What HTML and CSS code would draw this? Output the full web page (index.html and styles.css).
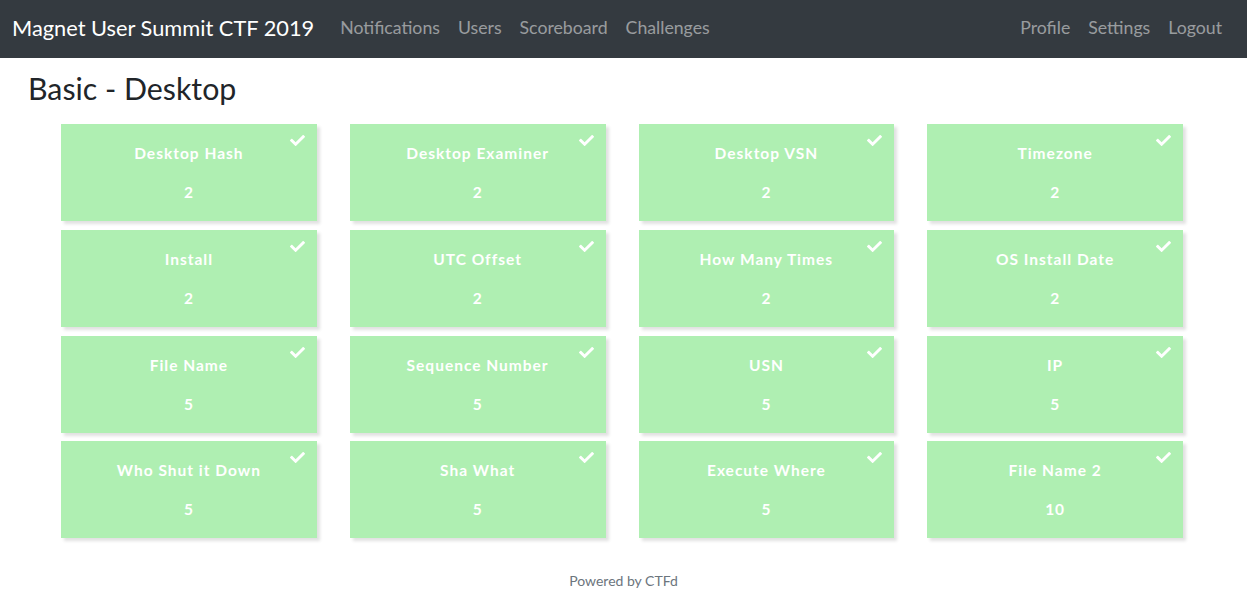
FILE: index.html
```html
<!DOCTYPE html>
<html lang="en">
<head>
<meta charset="utf-8">
<title>Challenges - Magnet User Summit CTF 2019</title>
<link rel="stylesheet" href="styles.css">
</head>
<body>
<nav class="navbar">
  <div class="nav-left">
    <a class="brand" href="#">Magnet User Summit CTF 2019</a>
    <a class="nav-link" href="#">Notifications</a>
    <a class="nav-link" href="#">Users</a>
    <a class="nav-link" href="#">Scoreboard</a>
    <a class="nav-link" href="#">Challenges</a>
  </div>
  <div class="nav-right">
    <a class="nav-link" href="#">Profile</a>
    <a class="nav-link" href="#">Settings</a>
    <a class="nav-link" href="#">Logout</a>
  </div>
</nav>

<main class="page">
  <h3 class="category">Basic - Desktop</h3>
  <div class="board">
    <button class="chal solved"><svg class="check" viewBox="0 0 512 512"><path d="M173.9 439.4l-166.4-166.4c-10-10-10-26.2 0-36.2l36.2-36.2c10-10 26.2-10 36.2 0L192 312.7 432.1 72.6c10-10 26.2-10 36.2 0l36.2 36.2c10 10 10 26.2 0 36.2l-294.4 294.4c-10 10-26.2 10-36.2 0z"/></svg><span class="name">Desktop Hash</span><span class="pts">2</span></button>
    <button class="chal solved"><svg class="check" viewBox="0 0 512 512"><path d="M173.9 439.4l-166.4-166.4c-10-10-10-26.2 0-36.2l36.2-36.2c10-10 26.2-10 36.2 0L192 312.7 432.1 72.6c10-10 26.2-10 36.2 0l36.2 36.2c10 10 10 26.2 0 36.2l-294.4 294.4c-10 10-26.2 10-36.2 0z"/></svg><span class="name">Desktop Examiner</span><span class="pts">2</span></button>
    <button class="chal solved"><svg class="check" viewBox="0 0 512 512"><path d="M173.9 439.4l-166.4-166.4c-10-10-10-26.2 0-36.2l36.2-36.2c10-10 26.2-10 36.2 0L192 312.7 432.1 72.6c10-10 26.2-10 36.2 0l36.2 36.2c10 10 10 26.2 0 36.2l-294.4 294.4c-10 10-26.2 10-36.2 0z"/></svg><span class="name">Desktop VSN</span><span class="pts">2</span></button>
    <button class="chal solved"><svg class="check" viewBox="0 0 512 512"><path d="M173.9 439.4l-166.4-166.4c-10-10-10-26.2 0-36.2l36.2-36.2c10-10 26.2-10 36.2 0L192 312.7 432.1 72.6c10-10 26.2-10 36.2 0l36.2 36.2c10 10 10 26.2 0 36.2l-294.4 294.4c-10 10-26.2 10-36.2 0z"/></svg><span class="name">Timezone</span><span class="pts">2</span></button>
    <button class="chal solved"><svg class="check" viewBox="0 0 512 512"><path d="M173.9 439.4l-166.4-166.4c-10-10-10-26.2 0-36.2l36.2-36.2c10-10 26.2-10 36.2 0L192 312.7 432.1 72.6c10-10 26.2-10 36.2 0l36.2 36.2c10 10 10 26.2 0 36.2l-294.4 294.4c-10 10-26.2 10-36.2 0z"/></svg><span class="name">Install</span><span class="pts">2</span></button>
    <button class="chal solved"><svg class="check" viewBox="0 0 512 512"><path d="M173.9 439.4l-166.4-166.4c-10-10-10-26.2 0-36.2l36.2-36.2c10-10 26.2-10 36.2 0L192 312.7 432.1 72.6c10-10 26.2-10 36.2 0l36.2 36.2c10 10 10 26.2 0 36.2l-294.4 294.4c-10 10-26.2 10-36.2 0z"/></svg><span class="name">UTC Offset</span><span class="pts">2</span></button>
    <button class="chal solved"><svg class="check" viewBox="0 0 512 512"><path d="M173.9 439.4l-166.4-166.4c-10-10-10-26.2 0-36.2l36.2-36.2c10-10 26.2-10 36.2 0L192 312.7 432.1 72.6c10-10 26.2-10 36.2 0l36.2 36.2c10 10 10 26.2 0 36.2l-294.4 294.4c-10 10-26.2 10-36.2 0z"/></svg><span class="name">How Many Times</span><span class="pts">2</span></button>
    <button class="chal solved"><svg class="check" viewBox="0 0 512 512"><path d="M173.9 439.4l-166.4-166.4c-10-10-10-26.2 0-36.2l36.2-36.2c10-10 26.2-10 36.2 0L192 312.7 432.1 72.6c10-10 26.2-10 36.2 0l36.2 36.2c10 10 10 26.2 0 36.2l-294.4 294.4c-10 10-26.2 10-36.2 0z"/></svg><span class="name">OS Install Date</span><span class="pts">2</span></button>
    <button class="chal solved"><svg class="check" viewBox="0 0 512 512"><path d="M173.9 439.4l-166.4-166.4c-10-10-10-26.2 0-36.2l36.2-36.2c10-10 26.2-10 36.2 0L192 312.7 432.1 72.6c10-10 26.2-10 36.2 0l36.2 36.2c10 10 10 26.2 0 36.2l-294.4 294.4c-10 10-26.2 10-36.2 0z"/></svg><span class="name">File Name</span><span class="pts">5</span></button>
    <button class="chal solved"><svg class="check" viewBox="0 0 512 512"><path d="M173.9 439.4l-166.4-166.4c-10-10-10-26.2 0-36.2l36.2-36.2c10-10 26.2-10 36.2 0L192 312.7 432.1 72.6c10-10 26.2-10 36.2 0l36.2 36.2c10 10 10 26.2 0 36.2l-294.4 294.4c-10 10-26.2 10-36.2 0z"/></svg><span class="name">Sequence Number</span><span class="pts">5</span></button>
    <button class="chal solved"><svg class="check" viewBox="0 0 512 512"><path d="M173.9 439.4l-166.4-166.4c-10-10-10-26.2 0-36.2l36.2-36.2c10-10 26.2-10 36.2 0L192 312.7 432.1 72.6c10-10 26.2-10 36.2 0l36.2 36.2c10 10 10 26.2 0 36.2l-294.4 294.4c-10 10-26.2 10-36.2 0z"/></svg><span class="name">USN</span><span class="pts">5</span></button>
    <button class="chal solved"><svg class="check" viewBox="0 0 512 512"><path d="M173.9 439.4l-166.4-166.4c-10-10-10-26.2 0-36.2l36.2-36.2c10-10 26.2-10 36.2 0L192 312.7 432.1 72.6c10-10 26.2-10 36.2 0l36.2 36.2c10 10 10 26.2 0 36.2l-294.4 294.4c-10 10-26.2 10-36.2 0z"/></svg><span class="name">IP</span><span class="pts">5</span></button>
    <button class="chal solved"><svg class="check" viewBox="0 0 512 512"><path d="M173.9 439.4l-166.4-166.4c-10-10-10-26.2 0-36.2l36.2-36.2c10-10 26.2-10 36.2 0L192 312.7 432.1 72.6c10-10 26.2-10 36.2 0l36.2 36.2c10 10 10 26.2 0 36.2l-294.4 294.4c-10 10-26.2 10-36.2 0z"/></svg><span class="name">Who Shut it Down</span><span class="pts">5</span></button>
    <button class="chal solved"><svg class="check" viewBox="0 0 512 512"><path d="M173.9 439.4l-166.4-166.4c-10-10-10-26.2 0-36.2l36.2-36.2c10-10 26.2-10 36.2 0L192 312.7 432.1 72.6c10-10 26.2-10 36.2 0l36.2 36.2c10 10 10 26.2 0 36.2l-294.4 294.4c-10 10-26.2 10-36.2 0z"/></svg><span class="name">Sha What</span><span class="pts">5</span></button>
    <button class="chal solved"><svg class="check" viewBox="0 0 512 512"><path d="M173.9 439.4l-166.4-166.4c-10-10-10-26.2 0-36.2l36.2-36.2c10-10 26.2-10 36.2 0L192 312.7 432.1 72.6c10-10 26.2-10 36.2 0l36.2 36.2c10 10 10 26.2 0 36.2l-294.4 294.4c-10 10-26.2 10-36.2 0z"/></svg><span class="name">Execute Where</span><span class="pts">5</span></button>
    <button class="chal solved"><svg class="check" viewBox="0 0 512 512"><path d="M173.9 439.4l-166.4-166.4c-10-10-10-26.2 0-36.2l36.2-36.2c10-10 26.2-10 36.2 0L192 312.7 432.1 72.6c10-10 26.2-10 36.2 0l36.2 36.2c10 10 10 26.2 0 36.2l-294.4 294.4c-10 10-26.2 10-36.2 0z"/></svg><span class="name">File Name 2</span><span class="pts">10</span></button>
  </div>
</main>

<footer class="footer">Powered by CTFd</footer>
</body>
</html>
```

FILE: styles.css
```css
* {
  box-sizing: border-box;
}

body {
  margin: 0;
  font-family: Lato, "Open Sans", sans-serif;
  color: #212529;
  background: #fff;
}

a {
  text-decoration: none;
}

/* top navigation */
.navbar {
  height: 58px;
  background: #343a40;
  display: flex;
  align-items: center;
  justify-content: space-between;
  padding: 0 16px 4px 12px;
}

.nav-left,
.nav-right {
  display: flex;
  align-items: center;
}

.brand {
  color: #fff;
  font-size: 21.8px;
  margin-right: 17px;
}

.nav-link {
  color: rgba(255, 255, 255, 0.5);
  font-size: 17.7px;
  padding: 8px 9px;
}

/* category */
.page {
  padding: 0 0 0 28px;
}

.category {
  margin: 12px 0 0;
  font-size: 30.3px;
  font-weight: 400;
  line-height: 1.2;
}

.board {
  margin: 18px 0 0 33px;
  width: 1122px;
  display: grid;
  grid-template-columns: repeat(4, 1fr);
  column-gap: 33px;
  row-gap: 8.67px;
}

.chal {
  position: relative;
  height: 97px;
  border: 0;
  padding: 0;
  color: #fff;
  font-family: inherit;
  display: flex;
  flex-direction: column;
  align-items: center;
  box-shadow: 3px 3px 3px rgba(0, 0, 0, 0.12);
  cursor: pointer;
}

.chal.solved {
  background: rgb(175, 239, 178);
}

.check {
  position: absolute;
  top: 9px;
  right: 12px;
  width: 15px;
  height: 15px;
  fill: #fff;
}

.name {
  margin-top: 20px;
  font-size: 15.5px;
  font-weight: 700;
  letter-spacing: 1px;
  line-height: 18px;
}

.pts {
  margin-top: 21px;
  font-size: 15.5px;
  font-weight: 700;
  letter-spacing: 1px;
  line-height: 18px;
}

.footer {
  margin-top: 34px;
  text-align: center;
  font-size: 14px;
  color: #6c757d;
}
```
